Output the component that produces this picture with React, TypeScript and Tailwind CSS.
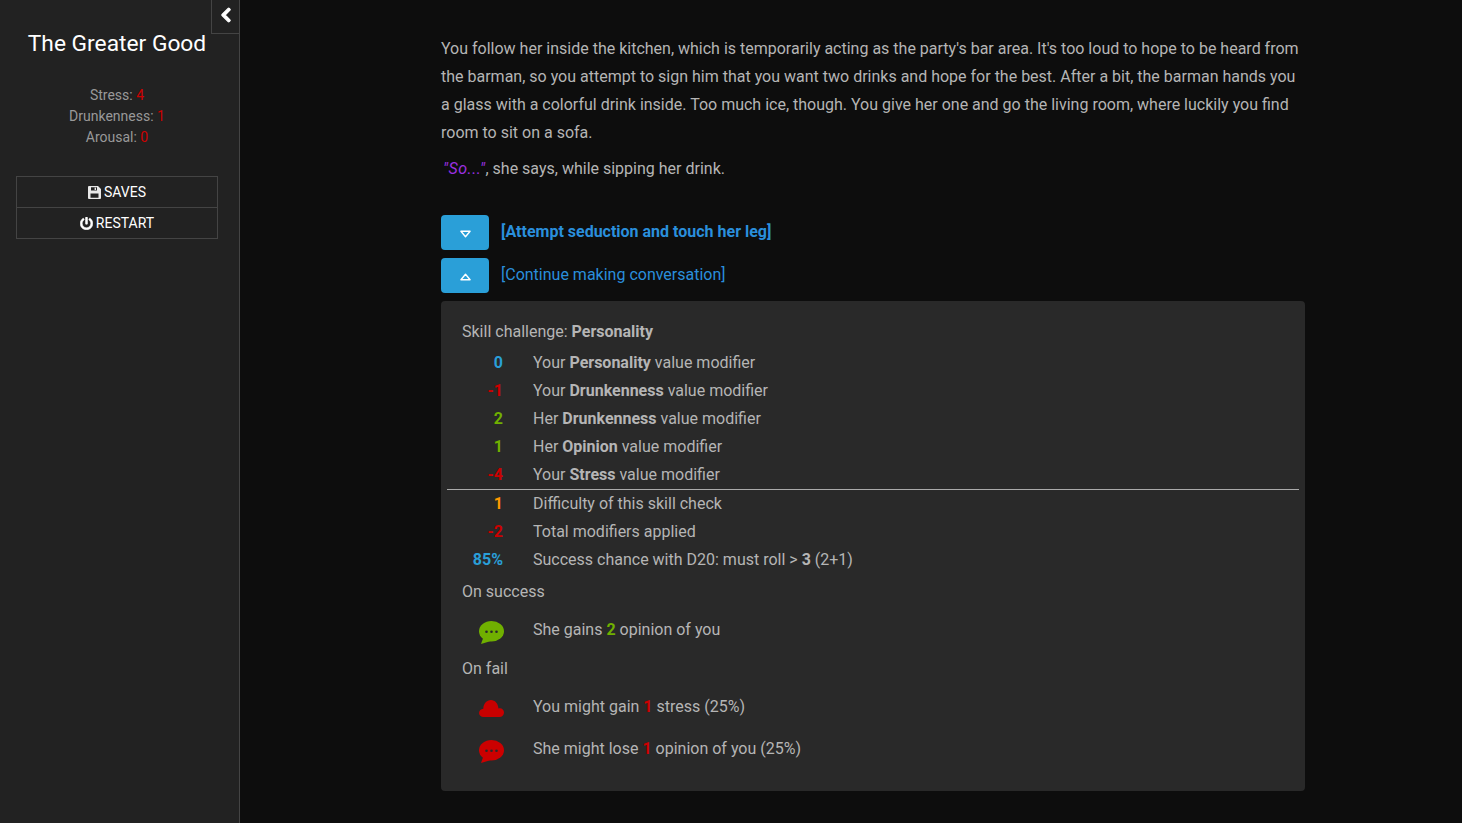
import { FaChevronLeft, FaPowerOff } from "react-icons/fa";

function Triangle({ up }: { up?: boolean }) {
  return (
    <svg viewBox="0 0 12 8" className={`w-[11px] h-[8px] ${up ? "mt-[3px]" : "mt-[2px]"}`}>
      <path
        d={up ? "M6 1 L11 7 H1 Z" : "M1 1 H11 L6 7 Z"}
        fill="none"
        stroke="white"
        strokeWidth="1.5"
        strokeLinejoin="round"
      />
    </svg>
  );
}

function Floppy() {
  return (
    <svg viewBox="0 0 13 13" className="w-[13px] h-[13px]">
      <path
        fillRule="evenodd"
        fill="#e8e8e8"
        d="M0 1 Q0 0 1 0 H10 L13 3 V12 Q13 13 12 13 H1 Q0 13 0 12 Z M3 1.2 V4.5 H9 V1.2 Z M2.5 7.5 V11.8 H10.5 V7.5 Z"
      />
      <rect x="6.6" y="1.6" width="1.4" height="2.4" fill="#e8e8e8" />
    </svg>
  );
}

// speech bubble with three dots, 25x23
function Bubble({ color }: { color: string }) {
  return (
    <svg viewBox="0 0 25 23" className={`w-[25px] h-[23px] mt-[5px] mr-[-1px] ${color}`}>
      <ellipse cx="12.5" cy="10.2" rx="12.5" ry="10.2" fill="currentColor" />
      <path d="M4.5 16 L2 23 L12 20 Z" fill="currentColor" />
      <circle cx="7.5" cy="10.8" r="1.3" fill="#292929" />
      <circle cx="12.5" cy="10.8" r="1.3" fill="#292929" />
      <circle cx="17.5" cy="10.8" r="1.3" fill="#292929" />
    </svg>
  );
}

function Cloud() {
  return (
    <svg viewBox="0 0 25 17" className="w-[25px] h-[17px] mt-[3px] mr-[-1px] text-[#c80000]">
      <path
        fill="currentColor"
        d="M4.5 17 H20.5 C23 17 25 15 25 12.5 C25 10 23 8.2 21 8.2 C20.5 8.2 20 8.3 19.5 8.5 C19 3.5 16 0 12 0 C7.5 0 4.5 3.5 4.3 8.7 C2 8.9 0 10.6 0 13 C0 15.3 2 17 4.5 17 Z"
      />
    </svg>
  );
}

function ChoiceRow({ up, bold, label }: { up?: boolean; bold?: boolean; label: string }) {
  return (
    <div className="flex items-center h-[35px] mb-2">
      <div className="w-12 h-[35px] rounded bg-[#2a9fd8] flex items-center justify-center">
        <Triangle up={up} />
      </div>
      <span className={`ml-3 pb-[2px] text-[#2a8fdc] ${bold ? "font-bold" : ""}`}>{label}</span>
    </div>
  );
}

function ModRow({ value, color, children }: { value: string; color: string; children: React.ReactNode }) {
  return (
    <div className="flex h-7 items-center">
      <div className={`w-[41px] text-right font-bold ${color}`}>{value}</div>
      <div className="ml-[30px]">{children}</div>
    </div>
  );
}

function OutcomeRow({ icon, children }: { icon: React.ReactNode; children: React.ReactNode }) {
  return (
    <div className="flex h-7 items-center">
      <div className="w-[41px] flex justify-end">{icon}</div>
      <div className="ml-[30px]">{children}</div>
    </div>
  );
}

export default function App() {
  return (
    <div className="flex h-[823px] overflow-hidden bg-[#0d0d0d] text-[#b5b5b5] font-['Roboto',sans-serif]">
      {/* Sidebar */}
      <aside className="relative w-[240px] shrink-0 bg-[#222222] border-r border-[#444444]">
        <button className="absolute top-0 right-0 w-[28px] h-[34px] pb-1 border-l border-b border-[#444444] bg-[#222222] flex items-center justify-center text-white">
          <FaChevronLeft size={16} strokeWidth={40} />
        </button>
        <div className="w-[234px]">
          <h1 className="pt-[29px] text-center text-white text-[22.75px] leading-[30px]">The Greater Good</h1>
          <div className="mt-[26px] text-center text-sm leading-[21px] text-[#999999]">
            <div>Stress: <span className="text-[#cc0000]">4</span></div>
            <div>Drunkenness: <span className="text-[#cc0000]">1</span></div>
            <div>Arousal: <span className="text-[#cc0000]">0</span></div>
          </div>
          <div className="mx-4 mt-[28px] border border-[#444444] text-sm text-white">
            <div className="h-[30px] flex items-center justify-center gap-[3px]">
              <Floppy />
              SAVES
            </div>
            <div className="h-[31px] border-t border-[#444444] flex items-center justify-center gap-[3px]">
              <FaPowerOff size={13} strokeWidth={20} />
              RESTART
            </div>
          </div>
        </div>
      </aside>

      {/* Passage */}
      <main className="flex-1 pl-[201px] pt-[35px]">
        <div className="w-[864px] leading-7">
          <p className="mb-2">
            You follow her inside the kitchen, which is temporarily acting as the party's bar area. It's too loud to hope to be heard from the barman, so you attempt to sign him that you want two drinks and hope for the best. After a bit, the barman hands you a glass with a colorful drink inside. Too much ice, though. You give her one and go the living room, where luckily you find room to sit on a sofa.
          </p>
          <p>
            <em className="text-[#9b30e0] pl-[2px] tracking-[0.5px]">"So..."</em>, she says, while sipping her drink.
          </p>

          <div className="mt-[32px]">
            <ChoiceRow bold label="[Attempt seduction and touch her leg]" />
            <ChoiceRow up label="[Continue making conversation]" />
          </div>

          {/* Skill check card */}
          <div className="h-[490px] rounded bg-[#292929] px-[6px] pt-[17px]">
            <div className="px-[15px] mb-[3px]">
              Skill challenge: <b>Personality</b>
            </div>
            <div className="pl-[15px]">
              <ModRow value="0" color="text-[#2a9fd8]">Your <b>Personality</b> value modifier</ModRow>
              <ModRow value="-1" color="text-[#cc0000]">Your <b>Drunkenness</b> value modifier</ModRow>
              <ModRow value="2" color="text-[#70b000]">Her <b>Drunkenness</b> value modifier</ModRow>
              <ModRow value="1" color="text-[#70b000]">Her <b>Opinion</b> value modifier</ModRow>
              <ModRow value="-4" color="text-[#cc0000]">Your <b>Stress</b> value modifier</ModRow>
            </div>
            <hr className="border-t border-[#aaaaaa]" />
            <div className="pl-[15px]">
              <ModRow value="1" color="text-[#ff9800]">Difficulty of this skill check</ModRow>
              <ModRow value="-2" color="text-[#cc0000]">Total modifiers applied</ModRow>
              <ModRow value="85%" color="text-[#2a9fd8]">Success chance with D20: must roll &gt; <b>3</b> (2+1)</ModRow>
            </div>
            <div className="px-[15px] mt-1 h-7 flex items-center">On success</div>
            <div className="pl-[15px] mt-[10px]">
              <OutcomeRow icon={<Bubble color="text-[#70b000]" />}>
                She gains <b className="text-[#70b000]">2</b> opinion of you
              </OutcomeRow>
            </div>
            <div className="px-[15px] mt-[11px] h-7 flex items-center">On fail</div>
            <div className="pl-[15px] mt-[10px]">
              <OutcomeRow icon={<Cloud />}>
                You might gain <b className="text-[#cc0000]">1</b> stress (25%)
              </OutcomeRow>
            </div>
            <div className="pl-[15px] mt-[14px]">
              <OutcomeRow icon={<Bubble color="text-[#cc0000]" />}>
                She might lose <b className="text-[#cc0000]">1</b> opinion of you (25%)
              </OutcomeRow>
            </div>
          </div>
        </div>
      </main>
    </div>
  );
}
